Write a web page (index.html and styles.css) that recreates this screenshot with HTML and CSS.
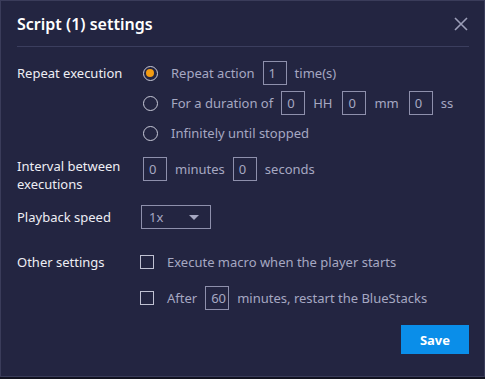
FILE: index.html
```html
<!DOCTYPE html>
<html lang="en">
  <head>
    <meta charset="utf-8">
    <title>Script settings</title>
    <link rel="stylesheet" href="styles.css">
  </head>
  <body>
    <div class="dialog">
      <div class="header">
        <h2 class="title">Script (1) settings</h2>
        <svg class="close" width="14" height="14" viewBox="0 0 14 14">
          <path d="M1 1 L13 13 M13 1 L1 13" stroke="#9c9eb8" stroke-width="1.6" fill="none"/>
        </svg>
      </div>

      <div class="body">
        <!-- Repeat execution -->
        <div class="row">
          <div class="label">Repeat execution</div>
          <div class="options">
            <div class="line">
              <span class="radio checked"></span>
              <span class="text">Repeat action</span>
              <span class="box">1</span>
              <span class="text">time(s)</span>
            </div>
            <div class="line">
              <span class="radio"></span>
              <span class="text">For a duration of</span>
              <span class="box">0</span>
              <span class="text unit">HH</span>
              <span class="box">0</span>
              <span class="text unit">mm</span>
              <span class="box">0</span>
              <span class="text">ss</span>
            </div>
            <div class="line">
              <span class="radio"></span>
              <span class="text">Infinitely until stopped</span>
            </div>
          </div>
        </div>

        <!-- Interval -->
        <div class="row interval">
          <div class="label">Interval between executions</div>
          <div class="line">
            <span class="box">0</span>
            <span class="text">minutes</span>
            <span class="box">0</span>
            <span class="text">seconds</span>
          </div>
        </div>

        <!-- Playback speed -->
        <div class="row speed">
          <div class="label">Playback speed</div>
          <div class="select">
            <span class="text">1x</span>
            <span class="arrow"></span>
          </div>
        </div>

        <!-- Other settings -->
        <div class="row other">
          <div class="label">Other settings</div>
          <div class="options checks">
            <div class="line">
              <span class="check"></span>
              <span class="text">Execute macro when the player starts</span>
            </div>
            <div class="line">
              <span class="check"></span>
              <span class="text">After</span>
              <span class="box">60</span>
              <span class="text">minutes, restart the BlueStacks</span>
            </div>
          </div>
        </div>

        <div class="footer">
          <button class="save" type="button">Save</button>
        </div>
      </div>
    </div>
  </body>
</html>
```

FILE: styles.css
```css
/* dialog frame */
html, body {
    margin: 0;
    background-color: #121320;
}

.dialog {
    width: 485px;
    height: 377px;
    box-sizing: border-box;
    background-color: #232541;
    border: 1px solid #3a3c5a;
    font-family: 'Noto Sans', sans-serif;
    font-size: 13px;
    color: #eeeef4;
}

.header {
    margin: 0 15px 0 16px;
    height: 45px;
    border-bottom: 1px solid #3b3e5e;
    display: flex;
    align-items: center;
    justify-content: space-between;
}

.title {
    margin: 0;
    font-size: 16px;
    font-weight: 600;
    color: #ffffff;
}

.close {
    margin-right: 1px;
}

.body {
    padding: 14px 15px 0 16px;
}

.row {
    display: grid;
    grid-template-columns: 126px 1fr;
}

.label {
    line-height: 24px;
}

.options {
    display: flex;
    flex-direction: column;
    gap: 6px;
}

.line {
    display: flex;
    align-items: center;
    height: 24px;
    gap: 8px;
}

.text {
    color: #a6a8c2;
}

.text.unit {
    margin-right: 2px;
}

.radio {
    width: 15px;
    height: 15px;
    box-sizing: border-box;
    border: 1.6px solid #c8c9d8;
    border-radius: 50%;
    margin-right: 5px;
    position: relative;
}

.radio.checked::after {
    content: '';
    position: absolute;
    top: 2px;
    left: 2px;
    width: 8px;
    height: 8px;
    border-radius: 50%;
    background-color: #f39c12;
}

.box {
    width: 24px;
    height: 24px;
    box-sizing: border-box;
    border: 1px solid #8e90ac;
    color: #a6a8c2;
    line-height: 22px;
    padding-left: 5px;
}

.interval {
    margin-top: 12px;
}

.interval .label {
    line-height: 18px;
    padding-right: 20px;
}

.interval .line {
    align-self: start;
}

.speed {
    margin-top: 12px;
}

.select {
    width: 70px;
    height: 24px;
    box-sizing: border-box;
    border: 1px solid #8e90ac;
    margin-left: -2px;
    display: flex;
    align-items: center;
    justify-content: space-between;
    padding: 0 11px 0 7px;
}

.arrow {
    width: 0;
    height: 0;
    border-left: 5px solid transparent;
    border-right: 5px solid transparent;
    border-top: 5px solid #a6a8c2;
}

.other {
    margin-top: 21px;
}

.checks {
    gap: 12px;
    margin-left: -3px;
}

.check {
    width: 14px;
    height: 14px;
    box-sizing: border-box;
    border: 1.5px solid #c0c1d2;
    margin-right: 5px;
}

.footer {
    display: flex;
    justify-content: flex-end;
    margin-top: 15px;
}

.save {
    width: 68px;
    height: 29px;
    border: none;
    background-color: #0a8ee9;
    color: #ffffff;
    font-family: 'Noto Sans', sans-serif;
    font-size: 13px;
    font-weight: 700;
    cursor: pointer;
}
```
